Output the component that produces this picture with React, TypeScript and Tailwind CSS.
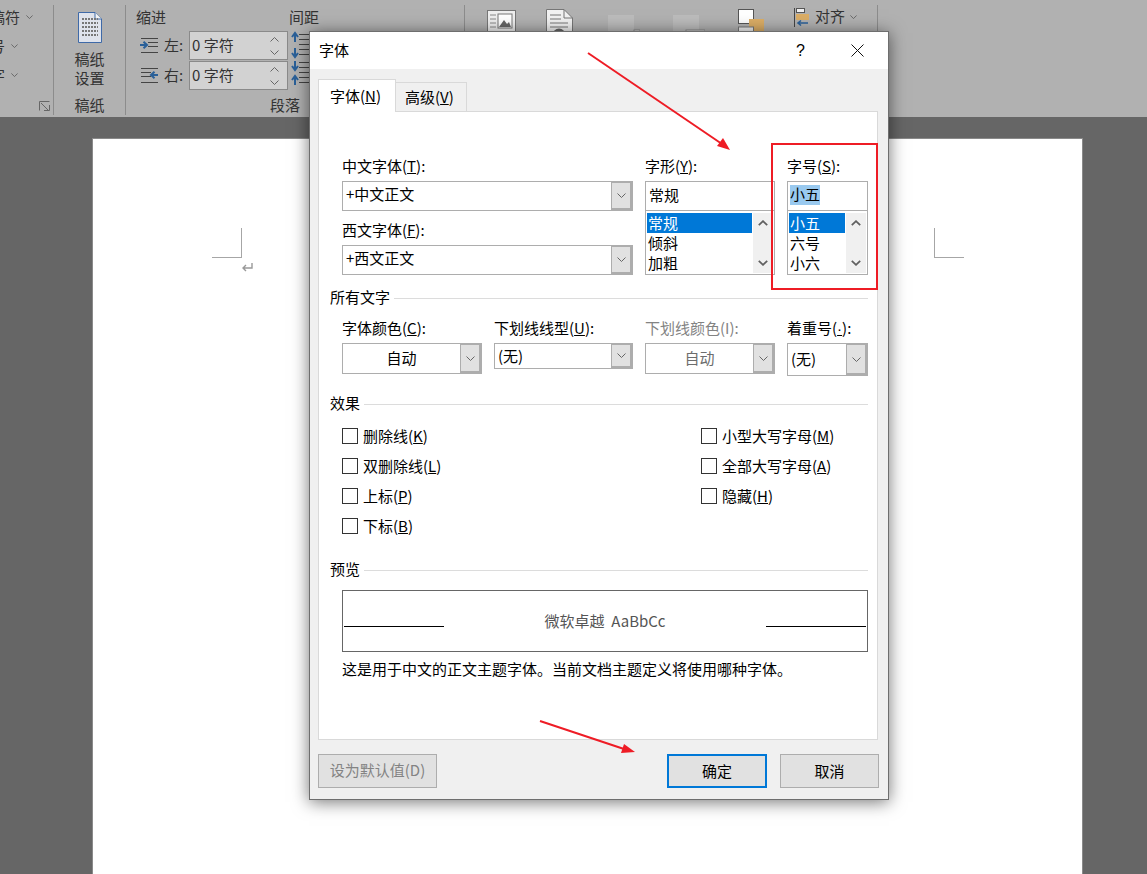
const FONT = "font-['Noto_Sans_CJK_SC','Liberation_Sans',sans-serif]";

function Chevron({ className = "", color = "#555" }: { className?: string; color?: string }) {
  return (
    <svg width="9" height="5" viewBox="0 0 9 5" className={className} fill="none">
      <path d="M0.5 0.5 L4.5 4.5 L8.5 0.5" stroke={color} strokeWidth="1" />
    </svg>
  );
}

function BoldChevron({ up }: { up?: boolean }) {
  return (
    <svg width="10" height="6" viewBox="0 0 10 6" fill="none">
      <path d={up ? "M0.8 5.2 L5 1.2 L9.2 5.2" : "M0.8 0.8 L5 4.8 L9.2 0.8"} stroke="#606060" strokeWidth="1.8" />
    </svg>
  );
}

function PaperIcon() {
  return (
    <svg width="24" height="31" viewBox="0 0 24 31">
      <path d="M0.5 0.5 H17 L23.5 7 V30.5 H0.5 Z" fill="#dfe3ec" stroke="#3f6aa8" />
      <path d="M17 0.5 V7 H23.5" fill="#f4f4f4" stroke="#3f6aa8" />
      {[7, 11, 15, 19, 23].map((y) => (
        <path key={y} d={`M4 ${y} H20`} stroke="#777" strokeWidth="2" strokeDasharray="2 1" />
      ))}
    </svg>
  );
}

function IndentIcon({ flip }: { flip?: boolean }) {
  return (
    <svg width="19" height="15" viewBox="0 0 19 15" fill="none">
      <path d="M1 0.5 H18 M8 4.5 H18 M8 8.5 H18 M1 14.5 H18" stroke="#444" transform={flip ? "matrix(-1 0 0 1 19 0)" : undefined} />
      {flip ? (
        <path d="M19 7 H13 M15.5 3.8 L12 7 L15.5 10.2" stroke="#2a6099" strokeWidth="2" transform="translate(-1 0)" />
      ) : (
        <path d="M0 7 H6 M3.5 3.8 L7 7 L3.5 10.2" stroke="#2a6099" strokeWidth="2" />
      )}
    </svg>
  );
}

function SpacingIcon({ inward }: { inward?: boolean }) {
  return (
    <svg width="19" height="28" viewBox="0 0 19 28" fill="none">
      <path d="M8 3.5 H19 M8 8.5 H19 M8 13.5 H19 M8 18.5 H19 M8 23.5 H19" stroke="#444" />
      {inward ? (
        <path d="M4 2 V10 M1 7 L4 11 L7 7 M4 26 V18 M1 21 L4 17 L7 21" stroke="#2a6099" strokeWidth="2" />
      ) : (
        <path d="M4 3 V11 M1 6 L4 2 L7 6 M4 25 V17 M1 22 L4 26 L7 22" stroke="#2a6099" strokeWidth="2" />
      )}
    </svg>
  );
}

function Spinner() {
  return (
    <div className="w-[99px] h-[29px] border border-[#8a8a8a] bg-[#d2d2d2] flex items-center justify-between pl-[2px] pr-[8px] text-[#333]">
      <span>0 字符</span>
      <div className="flex flex-col gap-[8px]">
        <Chevron className="rotate-180" color="#666" />
        <Chevron color="#666" />
      </div>
    </div>
  );
}

function Ribbon() {
  return (
    <div className="h-[117px] bg-[#b1b1b1] flex text-[#333] text-[15px] shrink-0">
      {/* cut-off styles group */}
      <div className="w-[54px] h-[110px] mt-[5px] border-r border-[#8c8c8c] relative overflow-hidden">
        <div className="flex flex-col items-end gap-[9px] pt-[2px]">
          {[
            { t: "稿符", pr: "pr-[20px]" },
            { t: "号", pr: "pr-[35px]" },
            { t: "字", pr: "pr-[35px]" },
          ].map((row) => (
            <div key={row.t} className={`h-[20px] flex items-center gap-[6px] leading-[18px] whitespace-nowrap ${row.pr}`}>
              <span>{row.t}</span>
              <Chevron color="#555" className="w-[7px] h-[4px]" />
            </div>
          ))}
        </div>
        <svg width="11" height="10" viewBox="0 0 11 10" className="absolute left-[39px] top-[96px]" fill="none">
          <path d="M0.5 9.5 V0.5 H10.5 M2 2 L9 9 M5 9.5 H10.5 V4" stroke="#666" />
        </svg>
      </div>

      {/* paper group */}
      <div className="w-[72px] h-[110px] mt-[5px] border-r border-[#8c8c8c] flex flex-col items-center">
        <div className="mt-[7px]"><PaperIcon /></div>
        <div className="mt-[6px] text-center leading-[19px]">稿纸<br />设置</div>
        <div className="mt-[8px] leading-[20px]">稿纸</div>
      </div>

      {/* paragraph group */}
      <div className="w-[339px] h-[110px] mt-[5px] border-r border-[#8c8c8c] pl-[10px] flex flex-col overflow-hidden">
        <div className="flex leading-[20px] mt-[2px]">
          <span className="w-[153px]">缩进</span>
          <span>间距</span>
        </div>
        <div className="flex mt-[4px]">
          <div className="flex flex-col gap-px">
            <div className="flex items-center pl-[4px]">
              <IndentIcon />
              <span className="ml-[5px] w-[25px] -mt-px">左:</span>
              <Spinner />
            </div>
            <div className="flex items-center pl-[4px]">
              <IndentIcon flip />
              <span className="ml-[5px] w-[25px] -mt-px">右:</span>
              <Spinner />
            </div>
          </div>
          <div className="flex flex-col pl-[3px]">
            <SpacingIcon />
            <SpacingIcon inward />
          </div>
        </div>
        <div className="ml-[134px] mt-[5px] leading-[20px]">段落</div>
      </div>

      {/* arrange group */}
      <div className="w-[413px] h-[110px] mt-[5px] border-r border-[#8c8c8c] flex items-start pl-[22px] relative">
        <svg width="29" height="30" viewBox="0 0 29 30" className="mt-[5px]" fill="none">
          <rect x="0.5" y="0.5" width="28" height="29" fill="#efefef" stroke="#777" />
          <rect x="11" y="4" width="14" height="14" fill="#fff" stroke="#777" />
          <path d="M12 17 L17 10 L20 14 L22 12 L24 17 Z" fill="#666" />
          <path d="M3 5 H9 M3 9 H9 M3 13 H9 M3 17 H9 M3 22 H25" stroke="#888" />
        </svg>
        <svg width="27" height="32" viewBox="0 0 27 32" className="mt-[4px] ml-[30px]" fill="none">
          <path d="M0.5 0.5 H18 L26.5 9 V31.5 H0.5 Z" fill="#f2f2f2" stroke="#777" />
          <path d="M18 0.5 V9 H26.5" stroke="#777" />
          <path d="M4 6 H15 M4 10 H15 M4 14 H22 M4 18 H22" stroke="#777" />
          <circle cx="13" cy="26" r="5" fill="none" stroke="#666" strokeWidth="3" />
        </svg>
        <svg width="32" height="28" viewBox="0 0 32 28" className="mt-[5px] ml-[35px]">
          <rect x="0" y="5" width="26" height="23" fill="#bcbcbc" />
          <rect x="26" y="20" width="6" height="8" fill="#e8e8e8" stroke="#8a8a8a" />
        </svg>
        <svg width="32" height="28" viewBox="0 0 32 28" className="mt-[5px] ml-[33px]">
          <rect x="0" y="5" width="26" height="23" fill="#bcbcbc" />
          <rect x="13" y="20" width="19" height="8" fill="#e4e4e4" stroke="#8a8a8a" />
        </svg>
        <svg width="27" height="30" viewBox="0 0 27 30" className="mt-[4px] ml-[33px]" fill="none">
          <rect x="0.5" y="0.5" width="15" height="14" fill="#fff" stroke="#555" />
          <rect x="11" y="10" width="15" height="12" fill="#dcae66" />
          <rect x="0.5" y="18" width="15" height="10" fill="#f0f0f0" stroke="#777" />
        </svg>
        <div className="ml-[29px] mt-[2px] flex items-center h-[20px]">
          <svg width="15" height="19" viewBox="0 0 15 19" fill="none">
            <path d="M0.5 0 V19" stroke="#444" />
            <rect x="2.5" y="0.5" width="8" height="4" fill="#f0f0f0" stroke="#555" />
            <rect x="2" y="6" width="13" height="6" fill="#dcae66" />
            <path d="M14 15 H4 M7 12.5 L4 15 L7 17.5" stroke="#2a6099" strokeWidth="1.6" />
          </svg>
          <span className="ml-[6px] mr-[5px] -mt-px">对齐</span>
          <Chevron color="#555" className="w-[7px] h-[4px]" />
        </div>
      </div>
    </div>
  );
}

function Combo({ text, h = "h-[30px]", center, disabled, pb = "pb-[3px]" }: { text: string; h?: string; center?: boolean; disabled?: boolean; pb?: string }) {
  return (
    <div className={`${h} border border-[#adadad] bg-white flex`}>
      <div className={`flex-1 flex items-center ${pb} ${center ? "justify-center" : "pl-[3px]"} ${disabled ? "text-[#6d6d6d]" : "text-black"}`}>{text}</div>
      <div className="w-[21px] border-t border-b-2 border-r-2 border-l border-[#adadad] bg-[#e1e1e1] flex items-center justify-center">
        <Chevron color="#666" />
      </div>
    </div>
  );
}

function ListCombo({ value, items, listW }: { value: string; items: string[]; listW: string }) {
  return (
    <div>
      <div className="h-[30px] border border-[#adadad] flex items-center pl-[2px] pb-[2px]">
        <span className={value === "小五" ? "bg-[#99c9ef] h-[20px] leading-[18px]" : "pl-px leading-[18px]"}>{value}</span>
      </div>
      <div className="h-[64px] border border-t-0 border-[#adadad] flex pl-[1px] pt-[2px] gap-px">
        <div className={`${listW} leading-[19px]`}>
          {items.map((t, i) => (
            <div key={t} className={i === 0 ? "bg-[#0078d7] text-white pl-[1px] h-[20px]" : "pl-[1px] h-[20px]"}>{t}</div>
          ))}
        </div>
        <div className="w-[20px] h-[60px] bg-[#f0f0f0] flex flex-col items-center justify-between py-[7px]">
          <BoldChevron up />
          <BoldChevron />
        </div>
      </div>
    </div>
  );
}

function Heading({ text }: { text: string }) {
  return (
    <div className="flex items-center h-[20px] gap-[4px]">
      <span className="-mt-px">{text}</span>
      <div className="flex-1 h-px bg-[#dcdcdc]" />
    </div>
  );
}

function Label({ children, muted }: { children: React.ReactNode; muted?: boolean }) {
  return <div className={`h-[24px] leading-[18px] whitespace-nowrap ${muted ? "text-[#838383]" : ""}`}>{children}</div>;
}

function Check({ label, k }: { label: string; k: string }) {
  return (
    <div className="h-[30px] flex items-center">
      <div className="w-[16px] h-[16px] border border-[#333] bg-white" />
      <span className="ml-[5px]">
        {label}(<u>{k}</u>)
      </span>
    </div>
  );
}

function FontDialog() {
  return (
    <div className="absolute left-[309px] top-[31px] w-[580px] h-[769px] border border-[#6e6e6e] bg-[#f0f0f0] flex flex-col shadow-[0_2px_16px_rgba(0,0,0,0.55)] text-black text-[15px]">
      <div className="h-[37px] bg-white flex items-center pl-[9px] shrink-0">
        <span className="-mt-px">字体</span>
        <span className="ml-auto text-[16px] font-['Liberation_Sans',sans-serif]">?</span>
        <svg width="13" height="13" viewBox="0 0 13 13" className="ml-[46px] mr-[24px]" fill="none">
          <path d="M0.5 0.5 L12.5 12.5 M12.5 0.5 L0.5 12.5" stroke="#111" />
        </svg>
      </div>

      <div className="flex-1 px-[8px] pr-[10px] flex flex-col">
        <div className="flex items-end h-[33px] mt-[10px] relative z-10 -mb-px">
          <div className="w-[78px] h-[33px] bg-white border border-b-0 border-[#d9d9d9] pl-[11px] pt-[6px] leading-[20px]">
            字体(<u>N</u>)
          </div>
          <div className="w-[71px] h-[30px] border border-l-0 border-[#d9d9d9] pl-[9px] pt-[4px] leading-[20px]">
            高级(<u>V</u>)
          </div>
        </div>

        <div className="h-[629px] bg-white border border-[#d9d9d9] pl-[11px] pr-[9px] pt-[45px]">
          <div className="pl-[12px] grid grid-cols-[291px_130px_81px] gap-x-[12px]">
            <div>
              <Label>中文字体(<u>T</u>):</Label>
              <Combo text="+中文正文" />
              <div className="mt-[10px]">
                <Label>西文字体(<u>F</u>):</Label>
              </div>
              <Combo text="+西文正文" />
            </div>
            <div>
              <Label>字形(<u>Y</u>):</Label>
              <ListCombo value="常规" items={["常规", "倾斜", "加粗"]} listW="w-[105px]" />
            </div>
            <div>
              <Label>字号(<u>S</u>):</Label>
              <ListCombo value="小五" items={["小五", "六号", "小六"]} listW="w-[56px]" />
            </div>
          </div>

          <div className="mt-[13px]"><Heading text="所有文字" /></div>
          <div className="mt-[11px] pl-[12px] grid grid-cols-[140px_139px_130px_81px] gap-x-[12px] items-start">
            <div>
              <Label>字体颜色(<u>C</u>):</Label>
              <Combo text="自动" h="h-[31px]" center pb="pb-[1px]" />
            </div>
            <div>
              <Label>下划线线型(<u>U</u>):</Label>
              <Combo text="(无)" h="h-[26px]" pb="pb-0" />
            </div>
            <div>
              <Label muted>下划线颜色(I):</Label>
              <Combo text="自动" h="h-[31px]" center disabled pb="pb-[1px]" />
            </div>
            <div>
              <Label>着重号(<u className="font-['Liberation_Sans',sans-serif]">·</u>):</Label>
              <Combo text="(无)" h="h-[33px]" pb="pb-[1px]" />
            </div>
          </div>

          <div className="mt-[18px]"><Heading text="效果" /></div>
          <div className="mt-[7px] pl-[12px] flex">
            <div className="w-[359px]">
              <Check label="删除线" k="K" />
              <Check label="双删除线" k="L" />
              <Check label="上标" k="P" />
              <Check label="下标" k="B" />
            </div>
            <div>
              <Check label="小型大写字母" k="M" />
              <Check label="全部大写字母" k="A" />
              <Check label="隐藏" k="H" />
            </div>
          </div>

          <div className="mt-[19px]"><Heading text="预览" /></div>
          <div className="mt-[10px] ml-[12px] h-[62px] border border-[#666] flex items-start px-[1px]">
            <div className="w-[100px] h-px bg-black mt-[35px]" />
            <div className="flex-1 text-center text-[#555] mt-[20px] leading-[20px]">微软卓越&nbsp;&nbsp;AaBbCc</div>
            <div className="w-[100px] h-px bg-black mt-[35px]" />
          </div>
          <div className="mt-[7px] ml-[12px] leading-[20px]">这是用于中文的正文主题字体。当前文档主题定义将使用哪种字体。</div>
        </div>

        <div className="flex mt-[14px] h-[34px] -mr-px">
          <button className="w-[119px] border border-[#adadad] bg-[#e1e1e1] text-[#838383] pb-px">设为默认值(D)</button>
          <button className="w-[100px] ml-auto border-2 border-[#0078d7] bg-[#e1e1e1]">确定</button>
          <button className="w-[99px] ml-[13px] border border-[#adadad] bg-[#e1e1e1]">取消</button>
        </div>
      </div>
    </div>
  );
}

export default function App() {
  return (
    <div className={`relative w-[1147px] h-[874px] overflow-hidden bg-[#666] flex flex-col ${FONT}`}>
      <Ribbon />
      <div className="flex-1 pl-[92px] pr-[64px] pt-[21px] min-h-0">
        <div className="h-full bg-white border-t border-l border-r border-[#8a8a8a] pt-[89px] pl-[119px] pr-[118px] flex justify-between items-start">
          <div className="relative w-[30px] h-[30px] border-r border-b border-[#a6a6a6]">
            <svg width="11" height="10" viewBox="0 0 11 10" className="absolute left-[30px] top-[35px]" fill="none">
              <path d="M10 0 V5 H1 M4 2 L1 5 L4 8" stroke="#999" strokeWidth="1.4" />
            </svg>
          </div>
          <div className="w-[30px] h-[30px] border-l border-b border-[#a6a6a6]" />
        </div>
      </div>

      <FontDialog />

      {/* red annotations drawn over the dialog */}
      <div className="absolute left-[771px] top-[143px] w-[107px] h-[147px] border-2 border-[#ee1c25]" />
      <svg width="1147" height="874" className="absolute left-0 top-0 pointer-events-none" fill="none">
        <path d="M588 53 L722 144" stroke="#ee1c25" strokeWidth="2" />
        <path d="M730 150 L717 146 L723 138 Z" fill="#ee1c25" />
        <path d="M540 721 L624 749" stroke="#ee1c25" strokeWidth="2" />
        <path d="M635 752 L621 753 L624 744 Z" fill="#ee1c25" />
      </svg>
    </div>
  );
}
